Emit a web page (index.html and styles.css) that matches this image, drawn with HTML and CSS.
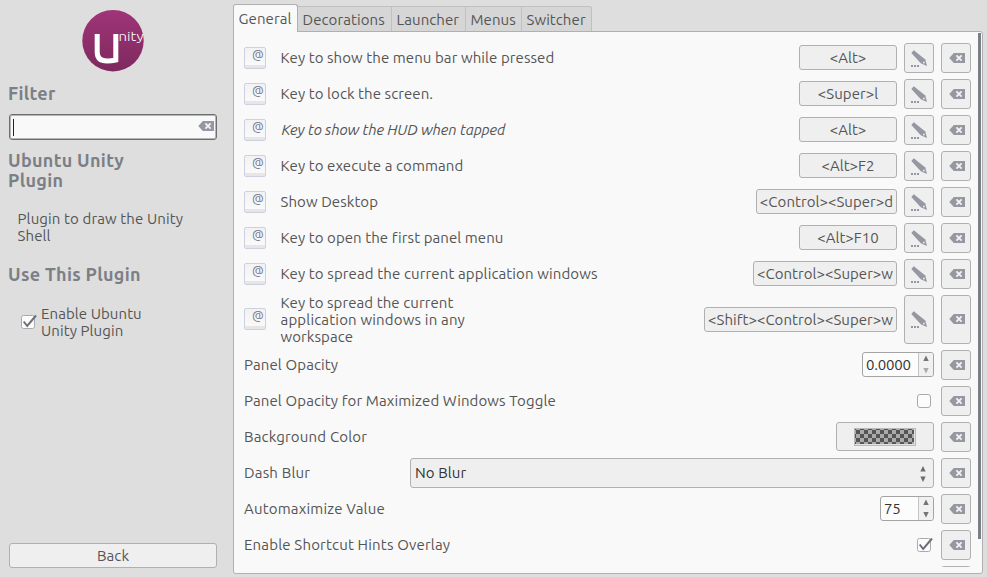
FILE: index.html
```html
<!DOCTYPE html>
<html lang="en">
<head>
<meta charset="utf-8">
<title>Ubuntu Unity Plugin</title>
<link rel="stylesheet" href="styles.css">
</head>
<body>
<svg width="0" height="0" class="defs">
  <defs>
    <linearGradient id="plum" x1="0" y1="0" x2="0" y2="1"><stop offset="0" stop-color="#a03478"/><stop offset="1" stop-color="#7d2a5e"/></linearGradient>
    <linearGradient id="cap" x1="0" y1="0" x2="0" y2="1"><stop offset="0" stop-color="#f2f2f4"/><stop offset="1" stop-color="#fbfbfc"/></linearGradient>
    <symbol id="clear" viewBox="0 0 16 10"><path d="M0.3 5 4.8 0H16v10H4.8z" fill="#9597a1"/><path d="M7.4 2.4l5.2 5.2M12.6 2.4 7.4 7.6" stroke="#f2f2f2" stroke-width="1.9"/></symbol>
    <symbol id="edit" viewBox="0 0 16 17"><path d="M.3 3 2.800.2 14.300 9.600 16 16 9.800 13.200z" fill="#9597a1"/><circle cx="12.900" cy="12.500" r=".9" fill="#efefef"/><path d="M0 15h2v2H0zM3 15h2v2H3zM6 15h2v2H6z" fill="#9597a1"/></symbol>
    <symbol id="key" viewBox="0 0 22 22"><rect x=".5" y=".5" width="21" height="21" rx="1.5" fill="url(#cap)" stroke="#ced0df"/><path d="M1 18h20v3H1z" fill="#e6e6e7"/><text x="8" y="12.3" class="at">@</text></symbol>
    <symbol id="tick" viewBox="0 0 16 15"><rect x=".5" y="1.500" width="13" height="13" rx="2" fill="#fcfcfc" stroke="#aaa"/><path d="M2.700 7.500 6.200 12 15 1.500" fill="none" stroke="#6d7078" stroke-width="2"/></symbol>
    <symbol id="arrows" viewBox="0 0 6 16"><path d="M.3 5.500 3 0 5.700 5.500zM.3 10.500h5.400L3 16z" fill="#6c6c6c"/></symbol>
  </defs>
</svg>
<div class="window">
  <aside class="sidebar">
    <svg class="logo" viewBox="0 0 62 62"><circle cx="31" cy="30.700" r="30.700" fill="url(#plum)"/><path d="M15.200 24v18q0 9 9.800 9 4.500 0 8.800-1V24" fill="none" stroke="#fff" stroke-width="5"/><text x="36.500" y="31" textLength="25" lengthAdjust="spacingAndGlyphs">nity</text></svg>
    <h2 class="h-filter">Filter</h2>
    <div class="filter"><i class="caret"></i><svg class="clear"><use href="#clear"/></svg></div>
    <h2 class="h-name">Ubuntu Unity Plugin</h2>
    <p class="desc">Plugin to draw the Unity Shell</p>
    <h2 class="h-use">Use This Plugin</h2>
    <label class="enable"><svg class="check"><use href="#tick"/></svg><span>Enable Ubuntu<br>Unity Plugin</span></label>
    <button class="back">Back</button>
  </aside>
  <main class="main">
    <nav class="tabs"><span class="tab active">General</span><span class="tab t2">Decorations</span><span class="tab t3">Launcher</span><span class="tab t4">Menus</span><span class="tab t5">Switcher</span></nav>
    <section class="panel">
      <div class="rows">
        <div class="row"><svg class="key"><use href="#key"/></svg><span class="label">Key to show the menu bar while pressed</span><button class="accel">&lt;Alt&gt;</button><button class="sq"><svg class="edit"><use href="#edit"/></svg></button><button class="sq"><svg class="clear"><use href="#clear"/></svg></button></div>
        <div class="row"><svg class="key"><use href="#key"/></svg><span class="label">Key to lock the screen.</span><button class="accel">&lt;Super&gt;l</button><button class="sq"><svg class="edit"><use href="#edit"/></svg></button><button class="sq"><svg class="clear"><use href="#clear"/></svg></button></div>
        <div class="row"><svg class="key"><use href="#key"/></svg><span class="label hud">Key to show the HUD when tapped</span><button class="accel">&lt;Alt&gt;</button><button class="sq"><svg class="edit"><use href="#edit"/></svg></button><button class="sq"><svg class="clear"><use href="#clear"/></svg></button></div>
        <div class="row"><svg class="key"><use href="#key"/></svg><span class="label">Key to execute a command</span><button class="accel">&lt;Alt&gt;F2</button><button class="sq"><svg class="edit"><use href="#edit"/></svg></button><button class="sq"><svg class="clear"><use href="#clear"/></svg></button></div>
        <div class="row"><svg class="key"><use href="#key"/></svg><span class="label">Show Desktop</span><button class="accel w141">&lt;Control&gt;&lt;Super&gt;d</button><button class="sq"><svg class="edit"><use href="#edit"/></svg></button><button class="sq"><svg class="clear"><use href="#clear"/></svg></button></div>
        <div class="row"><svg class="key"><use href="#key"/></svg><span class="label">Key to open the first panel menu</span><button class="accel">&lt;Alt&gt;F10</button><button class="sq"><svg class="edit"><use href="#edit"/></svg></button><button class="sq"><svg class="clear"><use href="#clear"/></svg></button></div>
        <div class="row"><svg class="key"><use href="#key"/></svg><span class="label wide">Key to spread the current application windows</span><button class="accel w144">&lt;Control&gt;&lt;Super&gt;w</button><button class="sq"><svg class="edit"><use href="#edit"/></svg></button><button class="sq"><svg class="clear"><use href="#clear"/></svg></button></div>
        <div class="row tall"><svg class="key"><use href="#key"/></svg><span class="label">Key to spread the current<br><span class="wider">application windows in any</span><br>workspace</span><button class="accel w193">&lt;Shift&gt;&lt;Control&gt;&lt;Super&gt;w</button><button class="sq"><svg class="edit"><use href="#edit"/></svg></button><button class="sq"><svg class="clear"><use href="#clear"/></svg></button></div>
        <div class="row"><span class="label wide">Panel Opacity</span><div class="spin w72"><span>0.0000</span><b><svg class="up"><path d="M.3 6 3 .5 5.700 6z"/></svg><svg class="down dim"><path d="M.3 0h5.400L3 5.500z"/></svg></b></div><button class="sq"><svg class="clear"><use href="#clear"/></svg></button></div>
        <div class="row"><span class="label wide">Panel Opacity for Maximized Windows Toggle</span><i class="box"></i><button class="sq"><svg class="clear"><use href="#clear"/></svg></button></div>
        <div class="row"><span class="label wider">Background Color</span><button class="color"><i></i></button><button class="sq"><svg class="clear"><use href="#clear"/></svg></button></div>
        <div class="row"><span class="label wider">Dash Blur</span><button class="combo"><span>No Blur</span><svg class="arrows"><use href="#arrows"/></svg></button><button class="sq"><svg class="clear"><use href="#clear"/></svg></button></div>
        <div class="row"><span class="label wider">Automaximize Value</span><div class="spin w54"><span>75</span><b><svg class="up"><path d="M.3 6 3 .5 5.700 6z"/></svg><svg class="down"><path d="M.3 0h5.400L3 5.500z"/></svg></b></div><button class="sq"><svg class="clear"><use href="#clear"/></svg></button></div>
        <div class="row"><span class="label wider">Enable Shortcut Hints Overlay</span><svg class="check end"><use href="#tick"/></svg><button class="sq"><svg class="clear"><use href="#clear"/></svg></button></div>
        <div class="row last"><span class="label"></span><button class="sq"></button></div>
      </div>
      <div class="scroll"></div>
    </section>
  </main>
</div>
</body>
</html>
```
FILE: styles.css
```css
* { box-sizing: border-box; }
body { margin: 0; background: #dedede; color: #555; font: 15px/17px Ubuntu, "Noto Sans", sans-serif; letter-spacing: 0.08px; overflow: hidden; }
button { font: inherit; letter-spacing: inherit; color: inherit; background: #efefef; border: 1px solid #b0b0b0; border-radius: 3px; padding: 0; white-space: nowrap; }
svg { display: block; flex: none; }
.defs { position: absolute; }
.window { display: flex; width: 987px; height: 577px; }

.sidebar { width: 233px; padding: 10px 16px 9px 9px; display: flex; flex-direction: column; }
.logo { width: 62px; height: 62px; margin-left: 73px; }
.logo text { font: 300 13px Ubuntu, "Open Sans", sans-serif; letter-spacing: 0; fill: #fff; }
h2 { margin: 0 0 0 -1px; font-size: 18px; line-height: 20px; font-weight: bold; color: #7c7f86; letter-spacing: 0.3px; }
.h-filter { margin-top: 11px; }
.filter { height: 26px; margin-top: 11px; border: 1px solid #6c6e72; border-radius: 3px; background: #f9f9f9; box-shadow: inset 0 0 0 1px #b5b6b8; display: flex; align-items: center; justify-content: space-between; padding: 0 3px; }
.filter .clear { margin: 0 -1px 2px 0; }
.caret { width: 1px; height: 17px; background: #222; }
.h-name { margin-top: 10px; width: 150px; }
.desc { margin: 20px 0 0 8.5px; width: 175px; letter-spacing: 0.12px; }
.h-use { margin-top: 20px; }
.enable { display: flex; align-items: center; gap: 4px; margin: 21px 0 0 12px; }
.check { width: 16px; height: 15px; }
.enable .check { margin-bottom: 2px; }
.back { height: 25px; margin-top: auto; }

.main { width: 750px; padding-top: 4px; display: flex; flex-direction: column; }
.tabs { height: 28px; display: flex; align-items: flex-end; }
.tab { height: 26px; background: #d6d6d6; border: 1px solid #c0c0c0; border-left: 0; border-bottom-color: #b0b0b0; padding-left: 4.5px; line-height: 25px; white-space: nowrap; }
.active { width: 65px; height: 28px; background: #f9f9f9; border: 1px solid #b0b0b0; border-bottom: 0; border-radius: 3px 3px 0 0; line-height: 27px; position: relative; z-index: 1; }
.t2 { width: 94px; } .t3 { width: 74px; } .t4 { width: 56px; } .t5 { width: 70px; border-radius: 0 3px 0 0; }
.panel { height: 543px; margin-top: -1px; border: 1px solid #b0b0b0; border-radius: 0 3px 3px 3px; background: #f9f9f9; display: flex; padding: 1px 1px 0 10px; }
.rows { width: 727px; height: 534px; padding-top: 10px; overflow: hidden; display: flex; flex-direction: column; gap: 6px; }
.row { height: 30px; flex: none; display: flex; align-items: center; }
.key { width: 22px; height: 22px; margin-right: 14.5px; }
.at { font: 12.5px Ubuntu, "Noto Sans", sans-serif; fill: #777b90; letter-spacing: 0; }
.label { flex: 1; white-space: nowrap; margin-bottom: 2px; }
.hud { font-style: italic; padding-left: 1px; letter-spacing: -0.1px; }
.wide { letter-spacing: 0.12px; }
.wider { letter-spacing: 0.18px; }
.accel { width: 98px; height: 25px; margin-bottom: 1px; letter-spacing: 0.04px; }
.w141 { width: 141px; } .w144 { width: 144px; } .w193 { width: 193px; }
.sq { width: 30px; height: 100%; margin-left: 7px; display: flex; align-items: center; justify-content: center; }
.clear { width: 16px; height: 10px; }
.sq .clear { margin-left: 2px; }
.edit { width: 16px; height: 17px; margin-top: 1px; }
.tall { height: 49px; }
.tall .label { margin-bottom: 0; }
.tall .key, .tall .clear { margin-bottom: 1px; }
.tall .edit { margin-top: 0; }
.spin { height: 25px; display: flex; border: 1px solid #a4a4a4; border-radius: 3px; background: #fcfcfc; color: #333; margin-bottom: 1px; }
.spin span { flex: 1; padding-left: 3px; line-height: 23px; letter-spacing: -0.2px; }
.spin b { width: 15px; border-left: 1px solid #c5c5c5; background: #f1f1f1; display: flex; flex-direction: column; align-items: center; justify-content: space-between; padding: 2px 0; border-radius: 0 3px 3px 0; }
.up, .down { width: 6px; height: 6px; fill: #747474; }
.dim { fill: #aaa; }
.w72 { width: 72px; } .w54 { width: 54px; }
.box { width: 14px; height: 14px; border: 1px solid #aaa; border-radius: 3px; background: #fcfcfc; margin-right: 3px; }
.color { width: 98px; height: 29px; margin-bottom: 1px; display: flex; align-items: center; justify-content: center; }
.color i { width: 62px; height: 18px; border: 1px solid #b8b8b8; background: linear-gradient(#e4e4e4, #e4e4e4) right / 1px 100% no-repeat, linear-gradient(#e4e4e4, #e4e4e4) bottom / 100% 1px no-repeat, repeating-conic-gradient(#aaa 0 25%, #555 0 50%) 1px 1px / 8px 8px; }
.combo { width: 524px; height: 30px; color: #333; display: flex; align-items: center; justify-content: space-between; padding: 0 7px 0 4px; }
.combo span { margin-bottom: 2px; }
.arrows { width: 6px; height: 16px; margin-top: 2px; }
.end { margin: 0 1px 2px 0; }
.scroll { width: 3px; height: 506px; margin-left: 7px; background: #7a7e87; }
```
